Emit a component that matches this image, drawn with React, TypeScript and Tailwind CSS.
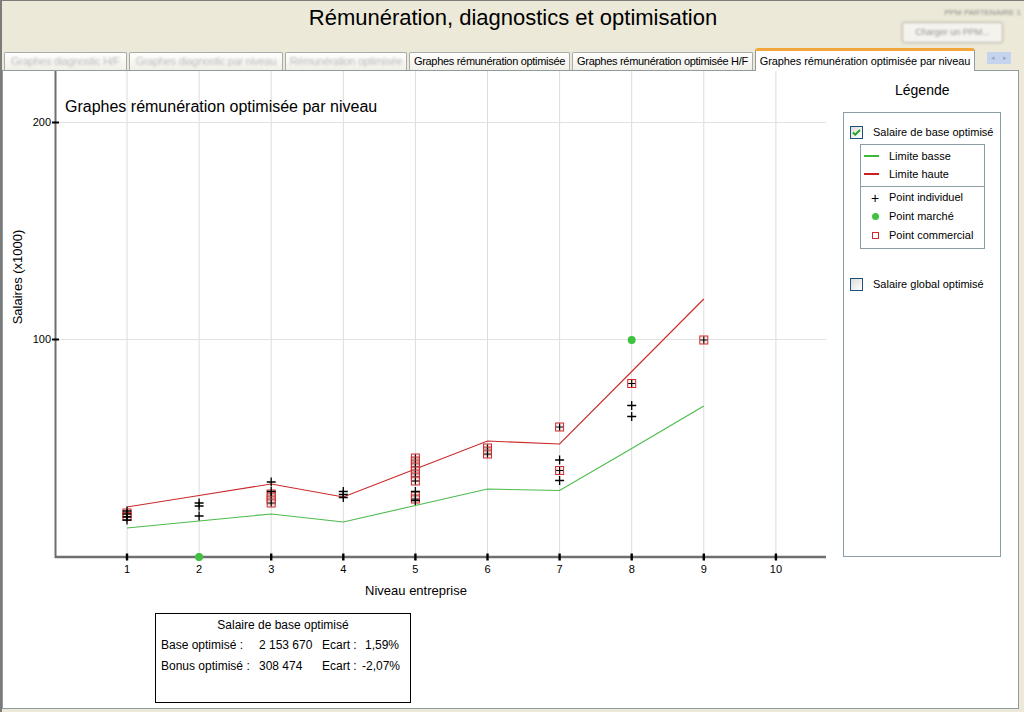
import React from 'react';

type Tab = { label: string; w: string; disabled?: boolean; active?: boolean };

const tabs: Tab[] = [
  { label: 'Graphes diagnostic H/F', w: 'w-[123px]', disabled: true },
  { label: 'Graphes diagnostic par niveau', w: 'w-[154px]', disabled: true },
  { label: 'Rémunération optimisée', w: 'w-[122px]', disabled: true },
  { label: 'Graphes rémunération optimisée', w: 'w-[161px]' },
  { label: 'Graphes rémunération optimisée H/F', w: 'w-[181px]' },
  { label: 'Graphes rémunération optimisée par niveau', w: 'w-[220px]', active: true },
];

// x position of each level on the axis
const lx = (n: number) => 127 + (n - 1) * 72.1;

const redLine = [507, 495.5, 484, 497, 469, 441, 444, 371.5, 299];
const greenLine = [528, 521, 514, 522, 505.5, 489, 490.5, 448.5, 406];

// individual points (crosses)
const crosses: [number, number][] = [
  [1, 511], [1, 514], [1, 517], [1, 520],
  [2, 503], [2, 506], [2, 516],
  [3, 482], [3, 491.5],
  [4, 491.5], [4, 494.5], [4, 497.5],
  [5, 491.5], [5, 500.5],
  [7, 460], [7, 480.5],
  [8, 405.5], [8, 416.5],
];

// commercial points (red squares, with an individual point on top)
const squares: [number, number][] = [
  [1, 513], [1, 516.5],
  [3, 494], [3, 497], [3, 500], [3, 503],
  [5, 458], [5, 461], [5, 464], [5, 467], [5, 471], [5, 474], [5, 477], [5, 481],
  [5, 496], [5, 499],
  [6, 448], [6, 451], [6, 454],
  [7, 427], [7, 470.5],
  [8, 383.5],
  [9, 340],
];

const market: [number, number][] = [
  [2, 557],
  [8, 340],
];

const FONT = 'Liberation Sans, Arial, sans-serif';

function Chart() {
  const pts = (arr: number[]) => arr.map((y, i) => `${lx(i + 1)},${y}`).join(' ');
  return (
    <svg width={839} height={540} viewBox="3 71 839 540" className="block">
      {/* grid */}
      {Array.from({ length: 10 }, (_, i) => (
        <line key={i} x1={lx(i + 1)} x2={lx(i + 1)} y1={71} y2={556} stroke="#dcdcdc" strokeWidth={1} />
      ))}
      <line x1={56} x2={826} y1={122.5} y2={122.5} stroke="#e2e2e2" />
      <line x1={56} x2={826} y1={339.5} y2={339.5} stroke="#e2e2e2" />

      {/* axes */}
      <line x1={55.5} x2={55.5} y1={71} y2={558} stroke="#6f6f6f" strokeWidth={2} />
      <line x1={55} x2={826} y1={557} y2={557} stroke="#6f6f6f" strokeWidth={2.5} />

      {/* y ticks */}
      <line x1={52} x2={59} y1={122.5} y2={122.5} stroke="#000" strokeWidth={2} />
      <line x1={52} x2={59} y1={339.5} y2={339.5} stroke="#000" strokeWidth={2} />
      <text x={51} y={126} textAnchor="end" fontFamily={FONT} fontSize={11} fill="#000">200</text>
      <text x={51} y={343} textAnchor="end" fontFamily={FONT} fontSize={11} fill="#000">100</text>

      {/* x ticks */}
      {Array.from({ length: 10 }, (_, i) => (
        <g key={i}>
          <rect x={lx(i + 1) - 1.2} y={553.5} width={2.4} height={7} fill="#000" />
          <text x={lx(i + 1)} y={573} textAnchor="middle" fontFamily={FONT} fontSize={11} fill="#000">
            {i + 1}
          </text>
        </g>
      ))}

      {/* titles */}
      <text x={65} y={112} fontFamily={FONT} fontSize={16} fill="#000">
        Graphes rémunération optimisée par niveau
      </text>
      <text x={416} y={595} textAnchor="middle" fontFamily={FONT} fontSize={13} fill="#000">
        Niveau entreprise
      </text>
      <text x={0} y={0} transform="translate(22 277) rotate(-90)" textAnchor="middle" fontFamily={FONT} fontSize={13} fill="#000">
        Salaires (x1000)
      </text>

      {/* limits */}
      <polyline points={pts(greenLine)} fill="none" stroke="#4cbb4c" strokeWidth={1.1} />
      <polyline points={pts(redLine)} fill="none" stroke="#c92a2a" strokeWidth={1.1} />

      {/* points */}
      {squares.map(([n, y], i) => (
        <g key={'s' + i}>
          <rect x={lx(n) - 4} y={y - 4} width={8} height={8} fill="#fbe3e3" fillOpacity={0.6} stroke="#d12b2b" strokeWidth={1} />
          <path d={`M${lx(n) - 3.5} ${y}h7M${lx(n)} ${y - 3.5}v7`} stroke="#000" strokeWidth={1.2} />
        </g>
      ))}
      {crosses.map(([n, y], i) => (
        <path key={'c' + i} d={`M${lx(n) - 4.5} ${y}h9M${lx(n)} ${y - 4.5}v9`} stroke="#000" strokeWidth={1.3} />
      ))}
      {market.map(([n, y], i) => (
        <circle key={'m' + i} cx={lx(n)} cy={y} r={4} fill="#3fc23f" />
      ))}
    </svg>
  );
}

function Checkbox({ checked }: { checked?: boolean }) {
  return (
    <div className="w-[13px] h-[13px] border border-[#1c5180] bg-gradient-to-br from-[#dcdcd7] to-white flex items-center justify-center shrink-0">
      {checked && (
        <svg width="9" height="9" viewBox="0 0 9 9">
          <path d="M1 4.5l2.2 2.2L8 2" fill="none" stroke="#21a121" strokeWidth={1.8} />
        </svg>
      )}
    </div>
  );
}

function Legend() {
  return (
    <div className="w-[176px] flex flex-col">
      <div className="pt-[11px] pl-[53px] text-[14px] leading-[17px]">Légende</div>
      <div className="mt-[13px] ml-[1px] w-[158px] h-[445px] border border-[#8b9ea7] pt-[13px] pl-[6px] text-[11px]">
        <div className="flex items-center gap-[10px] h-[13px]">
          <Checkbox checked />
          <span className="whitespace-nowrap">Salaire de base optimisé</span>
        </div>
        <div className="mt-[5px] ml-[10px] w-[125px] border border-[#8b9ea7]">
          <div className="flex flex-col pt-[2px] pb-[3px]">
            <div className="flex items-center h-[18px]">
              <div className="w-[15px] h-[2px] bg-[#3cb83c] ml-[3px] mr-[10px]" />
              <span>Limite basse</span>
            </div>
            <div className="flex items-center h-[18px]">
              <div className="w-[15px] h-[2px] bg-[#cc1f1f] ml-[3px] mr-[10px]" />
              <span>Limite haute</span>
            </div>
          </div>
          <div className="border-t border-[#8b9ea7] flex flex-col pt-[1px] pb-[3px]">
            <div className="flex items-center h-[19px]">
              <span className="w-[28px] text-center text-[14px] leading-none">+</span>
              <span>Point individuel</span>
            </div>
            <div className="flex items-center h-[19px]">
              <span className="w-[28px] flex justify-center">
                <span className="w-[7px] h-[7px] rounded-full bg-[#3fc23f]" />
              </span>
              <span>Point marché</span>
            </div>
            <div className="flex items-center h-[19px]">
              <span className="w-[28px] flex justify-center">
                <span className="w-[7px] h-[7px] border border-[#d12b2b]" />
              </span>
              <span>Point commercial</span>
            </div>
          </div>
        </div>
        <div className="mt-[29px] flex items-center gap-[10px] h-[13px]">
          <Checkbox />
          <span className="whitespace-nowrap">Salaire global optimisé</span>
        </div>
      </div>
    </div>
  );
}

function Summary() {
  return (
    <div className="mt-[2px] ml-[152px] w-[256px] h-[90px] border border-black text-[12px] leading-[15px] pt-[4px]">
      <div className="text-center">Salaire de base optimisé</div>
      <div className="grid grid-cols-[98px_63px_43px_1fr] pl-[5px] mt-[5px] gap-y-[6px]">
        <span>Base optimisé :</span>
        <span>2 153 670</span>
        <span>Ecart :</span>
        <span>1,59%</span>
        <span>Bonus optimisé :</span>
        <span>308 474</span>
        <span>Ecart :</span>
        <span className="-ml-[3px]">-2,07%</span>
      </div>
    </div>
  );
}

export default function App() {
  return (
    <div className="w-[1024px] h-[712px] overflow-hidden bg-[#ece9d8] border-t border-l-2 border-[#7b7b7b] font-['Liberation_Sans',Arial,sans-serif] text-black flex flex-col">
      {/* header */}
      <div className="h-[48px] grid grid-cols-[1fr_auto_1fr]">
        <div />
        <h1 className="pt-[4px] text-[22px] leading-[26px] whitespace-nowrap">Rémunération, diagnostics et optimisation</h1>
        <div className="flex flex-col items-end">
          <div className="pt-[7px] mr-[3px] text-[8px] leading-[10px] text-[#8a8a8a] whitespace-nowrap blur-[0.8px]">
            PPM PARTENAIRE 1
          </div>
          <div className="mt-[4px] mr-[21px] w-[101px] h-[21px] rounded-[3px] border border-[#b9b7aa] bg-[#f4f3ee] shadow-[0_0_2px_#c9c7ba] flex items-center justify-center text-[9px] text-[#949494] blur-[0.8px]">
            Charger un PPM...
          </div>
        </div>
      </div>

      {/* tabs */}
      <div className="h-[21px] flex items-end pl-[2px] relative z-10">
        <div className="flex items-end gap-[2px]">
          {tabs.map((t) =>
            t.active ? (
              <div
                key={t.label}
                className={`${t.w} h-[23px] -mb-[1px] bg-white border-x border-[#919b9c] border-t-[3px] border-t-[#f3a63b] rounded-t-[3px] flex items-center justify-center text-[11px] tracking-[-0.1px] whitespace-nowrap`}
              >
                {t.label}
              </div>
            ) : (
              <div
                key={t.label}
                className={`${t.w} h-[18px] bg-gradient-to-b from-white to-[#f0efe8] border border-b-0 border-[#a7aba9] rounded-t-[2px] flex items-center justify-center text-[11px] tracking-[-0.3px] whitespace-nowrap overflow-hidden`}
              >
                <span className={t.disabled ? 'text-[#bcbcbc] blur-[1px]' : ''}>{t.label}</span>
              </div>
            )
          )}
        </div>
        <div className="ml-[12px] mb-[6px] w-[24px] h-[12px] bg-[#c5d3ef] flex items-center justify-around text-[7px] text-[#98a6c4] blur-[0.5px]">
          <span>◂</span>
          <span>▸</span>
        </div>
      </div>

      {/* page */}
      <div className="w-[1017px] h-[639px] bg-white border border-[#919b9c] flex">
        <div className="flex flex-col">
          <Chart />
          <Summary />
        </div>
        <Legend />
      </div>
    </div>
  );
}
